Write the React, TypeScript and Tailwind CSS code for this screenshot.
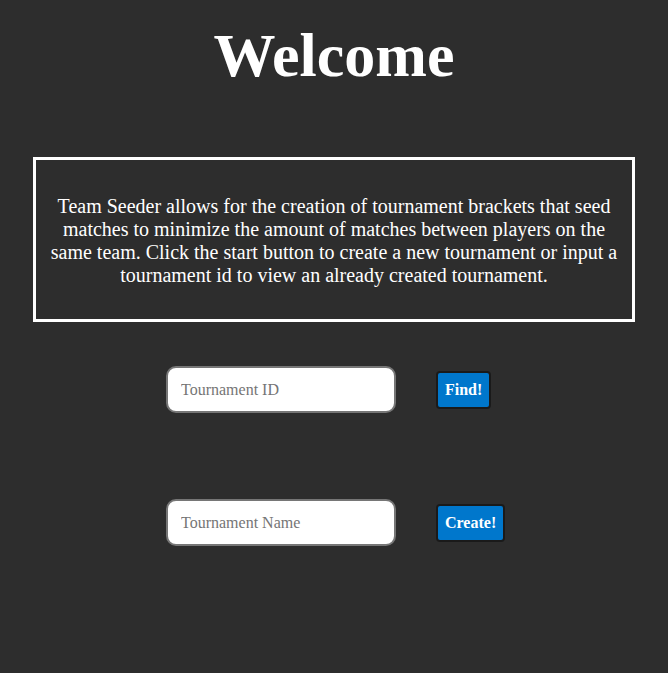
import React from 'react';

const App = () => {
  return (
    <div className="min-h-[673px] bg-[#2d2d2d] font-['Liberation_Serif',serif] text-white">
      <h1 className="pt-[18px] text-center text-[62px] font-bold leading-[74px]">Welcome</h1>

      <div className="mx-[33px] mt-[65px] border-[3px] border-white px-[12px] pt-[35px] pb-[32px] text-center text-[20px] leading-[23px]">
        Team Seeder allows for the creation of tournament brackets that seed matches to minimize the amount of matches
        between players on the same team. Click the start button to create a new tournament or input a tournament id to
        view an already created tournament.
      </div>

      <div className="mt-[44px] flex items-center gap-10 pl-[166px]">
        <input
          placeholder="Tournament ID"
          className="h-[47px] w-[230px] rounded-[10px] border-2 border-[#767676] bg-white px-[13px] text-[16px] text-black placeholder:text-[#757575] outline-none"
        />
        <button className="h-[38px] rounded-[4px] border-2 border-[#1a1a1a] bg-[#0077cc] px-[7px] text-[16px] font-bold text-white">
          Find!
        </button>
      </div>

      <div className="mt-[86px] flex items-center gap-10 pl-[166px]">
        <input
          placeholder="Tournament Name"
          className="h-[47px] w-[230px] rounded-[10px] border-2 border-[#767676] bg-white px-[13px] text-[16px] text-black placeholder:text-[#757575] outline-none"
        />
        <button className="h-[38px] rounded-[4px] border-2 border-[#1a1a1a] bg-[#0077cc] px-[7px] text-[16px] font-bold text-white">
          Create!
        </button>
      </div>
    </div>
  );
};

export default App;
